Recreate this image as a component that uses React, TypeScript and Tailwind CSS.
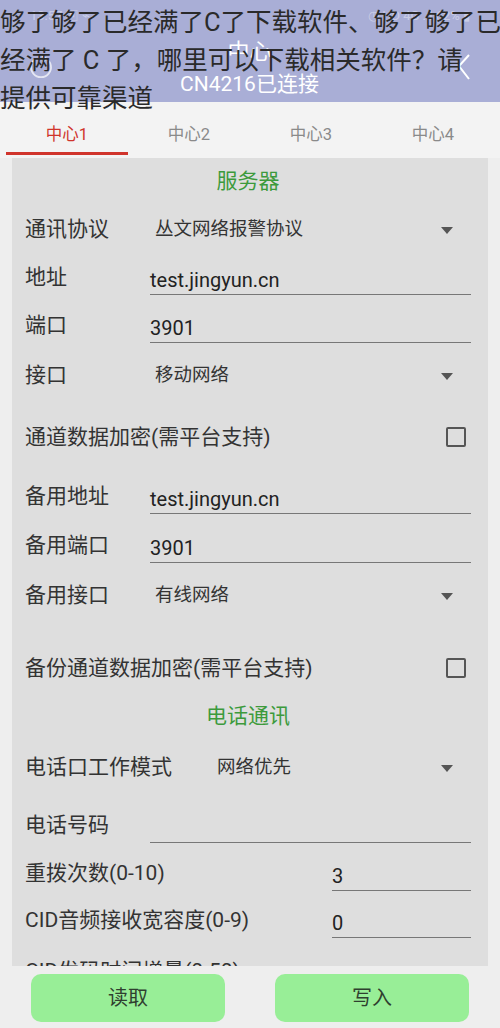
import React from 'react'

const FONT = 'font-[Roboto,"Noto_Sans_CJK_SC",sans-serif]'

function Caret() {
  return (
    <svg width="12" height="7" viewBox="0 0 12 7" className="shrink-0">
      <path d="M0 0 L12 0 L6 7 Z" fill="#555" />
    </svg>
  )
}

function Label({ text }: { text: string }) {
  return <span className="text-[21px] text-[#333] whitespace-nowrap leading-6">{text}</span>
}

function InputRow({ label, value, h, inputLeft = 'ml-[125px]' }: { label: string; value: string; h: string; inputLeft?: string }) {
  return (
    <div className={`flex items-center ${h}`}>
      <div className="w-0 overflow-visible">
        <Label text={label} />
      </div>
      <div className={`flex-1 ${inputLeft} pt-[6px] pb-[2px] border-b-[1.5px] border-[#777]`}>
        <div className="text-[20px] leading-6 text-[#222] h-6">{value}</div>
      </div>
    </div>
  )
}

function SelectRow({ label, value, h, valueLeft = 'ml-[130px]' }: { label: string; value: string; h: string; valueLeft?: string }) {
  return (
    <div className={`flex items-center ${h}`}>
      <div className="w-0 overflow-visible">
        <Label text={label} />
      </div>
      <div className={`flex-1 ${valueLeft} flex items-center justify-between pr-[18px]`}>
        <span className="text-[18.5px] text-[#333]">{value}</span>
        <Caret />
      </div>
    </div>
  )
}

function CheckRow({ label, h }: { label: string; h: string }) {
  return (
    <div className={`flex items-center justify-between ${h} pr-[5px]`}>
      <Label text={label} />
      <div className="w-5 h-5 border-2 border-[#555] rounded-[2px]" />
    </div>
  )
}

function Section({ title, h }: { title: string; h: string }) {
  return (
    <div className={`flex items-center justify-center ${h} text-[21px] text-[#3c9a3c]`}>{title}</div>
  )
}

export default function App() {
  const tabs = ['中心1', '中心2', '中心3', '中心4']

  return (
    <div className={`${FONT} w-[500px] h-[1028px] flex flex-col bg-[#eeeeee] overflow-hidden`}>
      {/* header with caption over it */}
      <div className="relative h-[102px] bg-[#a9aed6] shrink-0">
        <div className="flex items-center justify-between px-[30px] pt-[6px] text-[13px] leading-5 text-white/40">
          <span>13:57 ▣ ⌁</span>
          <span>◷ HD 4G .ıl 62% ▮</span>
        </div>
        <div className="grid grid-cols-[1fr_auto_1fr] items-center pl-[27px] pr-[28px] mt-[12px]">
          <svg width="28" height="28" viewBox="0 0 28 28" className="opacity-70">
            <path d="M19 5.5 A10 10 0 1 1 9 5.5" fill="none" stroke="white" strokeWidth="1.8" />
            <path d="M15 3 L19 5.5 L16 9" fill="none" stroke="white" strokeWidth="1.8" />
          </svg>
          <div className="flex flex-col items-center text-white">
            <span className="text-[22px] leading-7">中心</span>
            <span className="text-[21px] leading-6 mt-[6px]">CN4216已连接</span>
          </div>
          <div className="flex justify-end">
            <svg width="16" height="28" viewBox="0 0 16 28">
              <path d="M13 2 L3 13 L13 26" fill="none" stroke="white" strokeWidth="2" />
            </svg>
          </div>
        </div>
        <div className="absolute left-0 top-[3px] w-[520px] text-[25.5px] leading-[38px] text-[#2a2a2a] whitespace-nowrap">
          <div>够了够了已经满了C了下载软件、够了够了已</div>
          <div>经满了 C 了，哪里可以下载相关软件？请</div>
          <div>提供可靠渠道</div>
        </div>
      </div>

      {/* tabs */}
      <div className="h-[56px] bg-[#f3f3f3] shrink-0 px-[6px] pt-[16px]">
        <div className="flex">
          {tabs.map((t, i) => (
            <div key={t} className="flex-1 flex flex-col items-center">
              <span className={`text-[16.5px] leading-[34px] ${i === 0 ? 'text-[#d0342c]' : 'text-[#8a8a8a]'}`}>{t}</span>
              <div className={`h-[3px] w-full ${i === 0 ? 'bg-[#d0342c]' : ''}`} />
            </div>
          ))}
        </div>
      </div>

      {/* form panel */}
      <div className="flex-1 mx-[12px] bg-[#dedede] overflow-hidden pl-[13px] pr-[17px]">
        <Section title="服务器" h="h-[48px]" />
        <SelectRow label="通讯协议" value="丛文网络报警协议" h="h-[48px]" />
        <InputRow label="地址" value="test.jingyun.cn" h="h-[48px]" />
        <InputRow label="端口" value="3901" h="h-[48px]" />
        <SelectRow label="接口" value="移动网络" h="h-[52px]" />
        <CheckRow label="通道数据加密(需平台支持)" h="h-[70px]" />
        <InputRow label="备用地址" value="test.jingyun.cn" h="h-[50px]" />
        <InputRow label="备用端口" value="3901" h="h-[48px]" />
        <SelectRow label="备用接口" value="有线网络" h="h-[52px]" />
        <div className="h-[18px]" />
        <CheckRow label="备份通道数据加密(需平台支持)" h="h-[56px]" />
        <Section title="电话通讯" h="h-[42px]" />
        <SelectRow label="电话口工作模式" value="网络优先" h="h-[60px]" valueLeft="ml-[192px]" />
        <InputRow label="电话号码" value="" h="h-[56px]" />
        <InputRow label="重拨次数(0-10)" value="3" h="h-[40px]" inputLeft="ml-[307px]" />
        <InputRow label="CID音频接收宽容度(0-9)" value="0" h="h-[54px]" inputLeft="ml-[307px]" />
        <InputRow label="CID发码时间增量(0-50)" value="0" h="h-[48px]" inputLeft="ml-[307px]" />
      </div>

      {/* bottom buttons */}
      <div className="h-[62px] shrink-0 flex items-center justify-between px-[31px] pt-[2px]">
        <button className="w-[194px] h-[48px] rounded-[10px] bg-[#98ee97] text-[20px] leading-6 text-[#2f3f2f]">读取</button>
        <button className="w-[194px] h-[48px] rounded-[10px] bg-[#98ee97] text-[20px] leading-6 text-[#2f3f2f]">写入</button>
      </div>
    </div>
  )
}
